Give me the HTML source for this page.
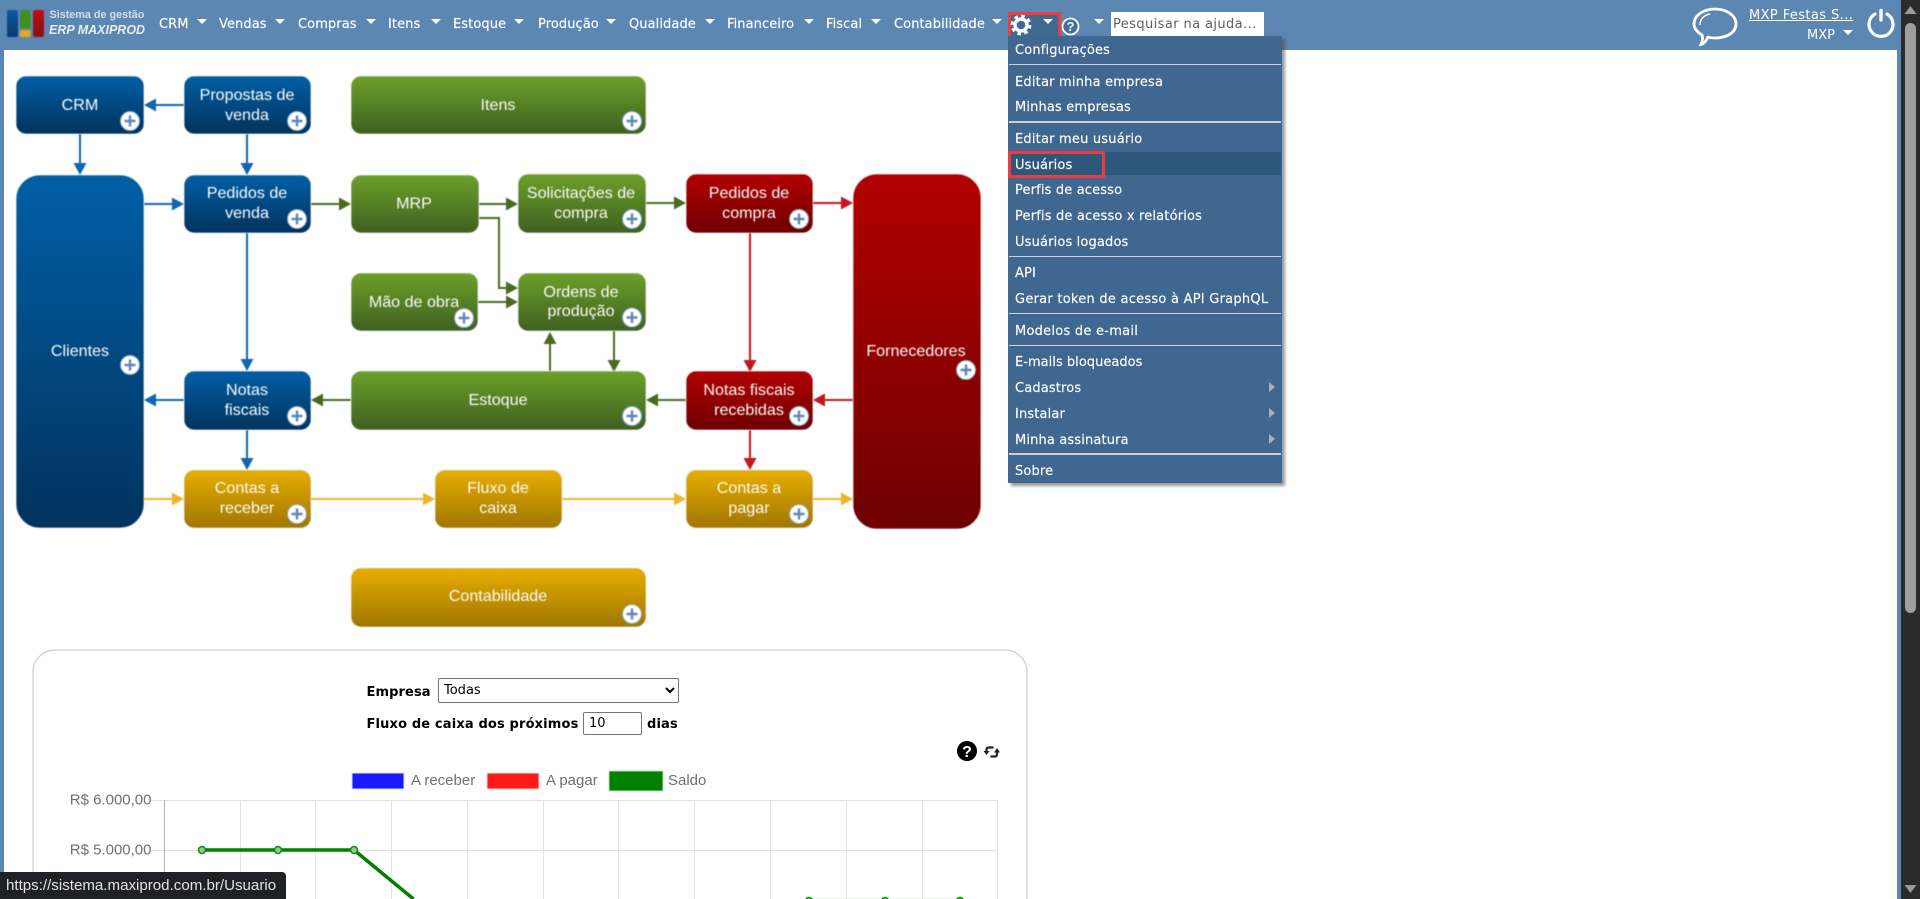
<!DOCTYPE html>
<html lang="pt-BR"><head><meta charset="utf-8"><title>ERP MAXIPROD</title>
<style>
*{box-sizing:border-box}
html,body{margin:0;padding:0;width:1920px;height:899px;overflow:hidden;background:#5c87b3}
body{position:relative;font-family:"DejaVu Sans","Liberation Sans",sans-serif;font-size:13px}
.abs,.nav,.mi,.dv,.ar,.dn{position:absolute}
#main{position:absolute;left:4px;top:50px;width:1893px;height:849px;background:#fff}
.nav{top:17px;color:#fff;font-size:13px;line-height:16px;white-space:nowrap;letter-spacing:.08px;-webkit-text-stroke:.15px #fff}
.dn{width:0;height:0;border-left:5px solid transparent;border-right:5px solid transparent;border-top:5px solid #fff;top:19px;margin-left:.5px}
#menu{position:absolute;left:1008px;top:36px;width:274px;height:447px;background:#3f678f;box-shadow:3px 3px 3px rgba(70,70,70,.55)}
.mi{left:7px;color:#fff;font-size:13px;line-height:18px;white-space:nowrap;letter-spacing:.15px;-webkit-text-stroke:.15px #fff;margin-top:2px}
.dv{left:1px;width:272px;height:1px;background:#c9d2dc}
.dv.t{height:2px}
.ar{left:261px;width:0;height:0;border-top:5.5px solid transparent;border-bottom:5.5px solid transparent;border-left:6px solid #a7b2bf}
.lab{position:absolute;font-weight:bold;color:#000;font-size:13px;line-height:16px;white-space:nowrap}
#st{position:absolute;left:0;top:872px;width:286px;height:27px;background:#202124;border-top-right-radius:4px;color:#e3e3e3;font:15.1px/28px "Liberation Sans",sans-serif;padding-left:6px;white-space:nowrap}
select{position:absolute;left:438px;top:678px;width:241px;height:25px;font:13px "DejaVu Sans",sans-serif;background:#fff;border:1px solid #767676;border-radius:2px;padding-left:1px;color:#000}
input{position:absolute;font-family:"DejaVu Sans",sans-serif;font-size:13px}
</style></head><body>
<div id="main"></div>

<svg class="abs" style="left:0;top:0;filter:blur(.4px)" width="1920" height="899" viewBox="0 0 1920 899" font-family="Liberation Sans, sans-serif">
<defs>
<linearGradient id="b" x1="0" y1="0" x2="0" y2="1"><stop offset="0" stop-color="#015fa6"/><stop offset="1" stop-color="#01335d"/></linearGradient>
<linearGradient id="g" x1="0" y1="0" x2="0" y2="1"><stop offset="0" stop-color="#6ca12a"/><stop offset="1" stop-color="#3f5f20"/></linearGradient>
<linearGradient id="r" x1="0" y1="0" x2="0" y2="1"><stop offset="0" stop-color="#b30000"/><stop offset="1" stop-color="#6e0000"/></linearGradient>
<linearGradient id="y" x1="0" y1="0" x2="0" y2="1"><stop offset="0" stop-color="#e8ae00"/><stop offset="1" stop-color="#a07600"/></linearGradient>
<g id="p"><circle r="9.5" fill="#fff" stroke="#8aa5c6" stroke-width="1"/><path d="M-5.5 0H5.5M0-5.5V5.5" stroke="#5b87b8" stroke-width="2.4"/></g>
</defs>

<!-- connectors -->
<g fill="none" stroke-width="2">
<g stroke="#1166ae">
<path d="M184 105H156M80 134V163M247 134V163M144 204H172M247 233V359M184 400H156M247 430V458"/>
</g>
<g stroke="#4a6a20">
<path d="M311 204H339M479 204H506M479 218H499V288H506M478 302H506M646 203H674M550 372V344M614 331V360M686 400H658M351 400H323"/>
</g>
<g stroke="#c4161e">
<path d="M813 203H841M750 233V360M853 400H825M750 430V458"/>
</g>
<g stroke="#f0b429">
<path d="M144 499H172M311 499H423M562 499H674M813 499H841"/>
</g>
</g>
<g fill="#1166ae"><path d="M144 105L156 98.5V111.5ZM80 175L73.500 163H86.500ZM247 175L240.500 163H253.500ZM184 204L172 197.500V210.500ZM247 371L240.500 359H253.500ZM144 400L156 393.500V406.500ZM247 470L240.500 458H253.500Z"/></g>
<g fill="#4a6a20"><path d="M351 204L339 197.500V210.500ZM518 204L506 197.500V210.500ZM518 288L506 281.500V294.500ZM518 302L506 295.500V308.500ZM686 203L674 196.500V209.500ZM550 332L543.500 344H556.500ZM614 372L607.500 360H620.500ZM646 400L658 393.500V406.500ZM311 400L323 393.500V406.500Z"/></g>
<g fill="#c4161e"><path d="M853 203L841 196.500V209.500ZM750 372L743.500 360H756.500ZM813 400L825 393.500V406.500ZM750 470L743.500 458H756.500Z"/></g>
<g fill="#f0b429"><path d="M184 499L172 492.500V505.500ZM435 499L423 492.500V505.500ZM686 499L674 492.500V505.500ZM853 499L841 492.500V505.500Z"/></g>

<!-- boxes -->
<g stroke="#e6ecf2" stroke-width=".8">
<rect x="16" y="76" width="128" height="58" rx="10" fill="url(#b)"/>
<rect x="184" y="76" width="127" height="58" rx="10" fill="url(#b)"/>
<rect x="351" y="76" width="295" height="58" rx="10" fill="url(#g)"/>
<rect x="16" y="175" width="128" height="353" rx="24" fill="url(#b)"/>
<rect x="184" y="175" width="127" height="58" rx="10" fill="url(#b)"/>
<rect x="351" y="175" width="128" height="58" rx="10" fill="url(#g)"/>
<rect x="518" y="174" width="128" height="59" rx="10" fill="url(#g)"/>
<rect x="686" y="174" width="127" height="59" rx="10" fill="url(#r)"/>
<rect x="853" y="174" width="128" height="355" rx="24" fill="url(#r)"/>
<rect x="351" y="273" width="127" height="58" rx="10" fill="url(#g)"/>
<rect x="518" y="273" width="128" height="58" rx="10" fill="url(#g)"/>
<rect x="184" y="371" width="127" height="59" rx="10" fill="url(#b)"/>
<rect x="351" y="371" width="295" height="59" rx="10" fill="url(#g)"/>
<rect x="686" y="371" width="127" height="59" rx="10" fill="url(#r)"/>
<rect x="184" y="470" width="127" height="58" rx="10" fill="url(#y)"/>
<rect x="435" y="470" width="127" height="58" rx="10" fill="url(#y)"/>
<rect x="686" y="470" width="127" height="58" rx="10" fill="url(#y)"/>
<rect x="351" y="568" width="295" height="59" rx="10" fill="url(#y)"/>
</g>

<g fill="#fbfbfb" font-size="16.1" text-anchor="middle">
<text x="80" y="110">CRM</text>
<text x="247" y="100">Propostas de</text><text x="247" y="120">venda</text>
<text x="498" y="110">Itens</text>
<text x="80" y="356">Clientes</text>
<text x="247" y="198">Pedidos de</text><text x="247" y="218">venda</text>
<text x="414" y="208.500">MRP</text>
<text x="581" y="198">Solicitações de</text><text x="581" y="218">compra</text>
<text x="749" y="198">Pedidos de</text><text x="749" y="218">compra</text>
<text x="916" y="356">Fornecedores</text>
<text x="414" y="307">Mão de obra</text>
<text x="581" y="297">Ordens de</text><text x="581" y="316">produção</text>
<text x="247" y="395">Notas</text><text x="247" y="415">fiscais</text>
<text x="498" y="405">Estoque</text>
<text x="749" y="395">Notas fiscais</text><text x="749" y="415">recebidas</text>
<text x="247" y="493">Contas a</text><text x="247" y="513">receber</text>
<text x="498" y="493">Fluxo de</text><text x="498" y="513">caixa</text>
<text x="749" y="493">Contas a</text><text x="749" y="513">pagar</text>
<text x="498" y="601">Contabilidade</text>
</g>

<use href="#p" x="130" y="121"/><use href="#p" x="297" y="121"/><use href="#p" x="632" y="121"/>
<use href="#p" x="130" y="365"/><use href="#p" x="297" y="219"/><use href="#p" x="632" y="219"/>
<use href="#p" x="799" y="219"/><use href="#p" x="966" y="370"/><use href="#p" x="464" y="318"/>
<use href="#p" x="632" y="317.500"/><use href="#p" x="297" y="416"/><use href="#p" x="632" y="416"/>
<use href="#p" x="799" y="416"/><use href="#p" x="297" y="514"/><use href="#p" x="799" y="514"/>
<use href="#p" x="632" y="614"/>
</svg>

<!-- card + chart -->
<svg class="abs" style="left:0;top:0" width="1920" height="899" viewBox="0 0 1920 899" font-family="Liberation Sans, sans-serif">
<path d="M33 899V672a22 22 0 0 1 22-22H1005a22 22 0 0 1 22 22V899" fill="none" stroke="#cfcfcf" stroke-width="1.200"/>
<g stroke="#e2e2e2" fill="none">
<path d="M151 800.500H997.500M151 850.500H997.500M240.500 800V899M315.500 800V899M391.500 800V899M467.500 800V899M543.500 800V899M618.500 800V899M694.500 800V899M770.500 800V899M846.500 800V899M922.500 800V899M997.500 800V899"/>
</g>
<path d="M164.500 800V899" stroke="#b3b3b3"/>
<rect x="352" y="773" width="52" height="16" fill="#1a1aff" stroke="#dcdcff"/>
<rect x="487" y="773" width="52" height="16" fill="#ff1a1a" stroke="#ffdcdc"/>
<rect x="609" y="771" width="54" height="20" fill="#008000" stroke="#b6dcb6"/>
<g fill="#707070" font-size="15">
<text x="411" y="785">A receber</text><text x="546" y="785">A pagar</text><text x="668" y="785">Saldo</text>
<text x="151.500" y="804.500" text-anchor="end">R$ 6.000,00</text>
<text x="151.500" y="854.500" text-anchor="end">R$ 5.000,00</text>
</g>
<path d="M202 850H354L413.500 899" fill="none" stroke="#008000" stroke-width="3.500"/>
<path d="M809 899.500H960" stroke="#b8dfb8" stroke-width="1.500"/>
<g fill="#8fcb8f" stroke="#118a11" stroke-width="1.500">
<circle cx="202" cy="850" r="3.500"/><circle cx="278" cy="850" r="3.500"/><circle cx="354" cy="850" r="3.500"/>
<circle cx="809" cy="901" r="3.500"/><circle cx="885" cy="901" r="3.500"/><circle cx="960" cy="901" r="3.500"/>
</g>
<circle cx="967" cy="751" r="10" fill="#000"/>
<text x="967" y="757" fill="#fff" font-size="16" font-weight="bold" text-anchor="middle">?</text>
<g fill="none" stroke="#222" stroke-width="2.200">
<path d="M993.500 747.500H988.500a2 2 0 0 0-2 2V752"/><path d="M990.500 756.500H995a2 2 0 0 0 2-2V751"/>
</g>
<path d="M983.500 751H989.500L986.500 755ZM994 752.500H1000L997 748Z" fill="#222"/>
</svg>

<div class="lab" style="left:366.500px;top:685px;letter-spacing:.1px">Empresa</div>
<select><option>Todas</option></select>
<div class="lab" style="left:366.500px;top:717px;letter-spacing:.15px">Fluxo de caixa dos próximos</div>
<input value="10" style="left:583px;top:712px;width:59px;height:23px;border:1px solid #767676;border-radius:2px;padding:0 5px;background:#fff;color:#000">
<div class="lab" style="left:647px;top:717px;letter-spacing:.15px">dias</div>

<!-- header -->
<div class="abs" style="left:0;top:0;width:1901px;height:50px;background:#5c87b3"></div>
<svg class="abs" style="left:7px;top:10px;filter:blur(.4px)" width="38" height="28" viewBox="0 0 38 28">
<defs>
<linearGradient id="lb" x1="0" y1="0" x2="0" y2="1"><stop offset="0" stop-color="#0c5aa6"/><stop offset="1" stop-color="#0b3a6e"/></linearGradient>
<linearGradient id="lr" x1="0" y1="0" x2="0" y2="1"><stop offset="0" stop-color="#c00d12"/><stop offset="1" stop-color="#8a1018"/></linearGradient>
</defs>
<rect x="0" y="0" width="11" height="27" rx="2" fill="url(#lb)"/>
<rect x="13" y="0" width="10.500" height="18.500" rx="2" fill="#3f8f1e"/>
<rect x="13" y="20" width="10.500" height="7" rx="1.500" fill="#e3a91c"/>
<rect x="26" y="0" width="11" height="27" rx="2" fill="url(#lr)"/>
</svg>
<div class="abs" style="left:49.500px;top:9px;color:#d5dee8;font:bold 10.800px/13px 'Liberation Sans',sans-serif;white-space:nowrap">Sistema de gestão</div>
<div class="abs" style="left:49px;top:23px;color:#e6ecf2;font:italic bold 12.500px/15px 'Liberation Sans',sans-serif;white-space:nowrap">ERP MAXIPROD</div>

<span class="nav" style="left:159px">CRM</span><i class="dn" style="left:196px"></i>
<span class="nav" style="left:219px">Vendas</span><i class="dn" style="left:274px"></i>
<span class="nav" style="left:298px">Compras</span><i class="dn" style="left:365px"></i>
<span class="nav" style="left:388px">Itens</span><i class="dn" style="left:430px"></i>
<span class="nav" style="left:453px">Estoque</span><i class="dn" style="left:513px"></i>
<span class="nav" style="left:538px">Produção</span><i class="dn" style="left:605px"></i>
<span class="nav" style="left:629px">Qualidade</span><i class="dn" style="left:704px"></i>
<span class="nav" style="left:727px">Financeiro</span><i class="dn" style="left:803px"></i>
<span class="nav" style="left:826px">Fiscal</span><i class="dn" style="left:870px"></i>
<span class="nav" style="left:894px">Contabilidade</span><i class="dn" style="left:991px"></i>

<div class="abs" style="left:1008px;top:12px;width:53px;height:28px;background:#416a93;border:3px solid #f23b3f"></div>
<svg class="abs" style="left:1009px;top:13px" width="24" height="24" viewBox="0 0 24 24" fill="none" stroke="#fff">
<circle cx="12" cy="12" r="6" stroke-width="3.400"/>
<circle cx="12" cy="12" r="8.800" stroke-width="3.200" stroke-dasharray="3.450 3.460"/>
</svg>
<i class="dn" style="left:1042px;top:19px"></i>
<svg class="abs" style="left:1061px;top:17px" width="19" height="19" viewBox="0 0 19 19">
<circle cx="9.500" cy="9.500" r="8" fill="#44709b" stroke="#fff" stroke-width="1.800"/>
<text x="9.500" y="14" text-anchor="middle" fill="#f0f4f8" font-family="Liberation Sans,sans-serif" font-size="13" font-weight="bold">?</text>
</svg>
<i class="dn" style="left:1093px;top:19px"></i>
<div class="abs" style="left:1111px;top:12px;width:153px;height:24px;background:#fff;color:#5f5f5f;font-size:13px;line-height:26px;padding-left:2px;white-space:nowrap;overflow:hidden;letter-spacing:.4px">Pesquisar na ajuda...</div>

<svg class="abs" style="left:1690px;top:5px" width="52" height="44" viewBox="0 0 52 44" fill="none" stroke="#fff" stroke-width="2.800">
<path d="M25 4C36 4 46 10 46 19C46 28 36 33 25 33C22 33 20 32.700 18 32.200C16 36 14 39 11 39.500C12.500 36.500 13 33 12 30C7 27 4 23.500 4 19C4 10 14 4 25 4Z"/>
<path d="M10 20C10 14 14 10 20 9" stroke-width="1.400"/>
</svg>
<div class="abs" style="left:1749px;top:8px;color:#fff;font-size:13px;line-height:16px;text-decoration:underline;white-space:nowrap;letter-spacing:.4px">MXP Festas S...</div>
<div class="abs" style="left:1807px;top:28px;color:#fff;font-size:13px;line-height:16px">MXP</div>
<i class="dn" style="left:1842px;top:30px"></i>
<svg class="abs" style="left:1866px;top:4px" width="30" height="36" viewBox="0 0 30 36" fill="none" stroke="#fff" stroke-linecap="round">
<path d="M9 10A12 12 0 1 0 21 10" stroke-width="3.200"/>
<path d="M15 6.500V16" stroke-width="3.400"/>
</svg>

<!-- dropdown -->
<div id="menu">
<div class="mi" style="top:4px">Configurações</div>
<div class="dv" style="top:28px"></div>
<div class="mi" style="top:36px;letter-spacing:.2px">Editar minha empresa</div>
<div class="mi" style="top:61px">Minhas empresas</div>
<div class="dv t" style="top:85px"></div>
<div class="mi" style="top:93px;letter-spacing:.2px">Editar meu usuário</div>
<div class="abs" style="left:0;top:116px;width:273px;height:23px;background:#2e577c"></div>
<div class="mi" style="top:119px">Usuários</div>
<div class="mi" style="top:144px">Perfis de acesso</div>
<div class="mi" style="top:170px;letter-spacing:.17px">Perfis de acesso x relatórios</div>
<div class="mi" style="top:196px">Usuários logados</div>
<div class="dv" style="top:220px"></div>
<div class="mi" style="top:227px">API</div>
<div class="mi" style="top:253px;letter-spacing:.25px">Gerar token de acesso à API GraphQL</div>
<div class="dv" style="top:277px"></div>
<div class="mi" style="top:285px;letter-spacing:.25px">Modelos de e-mail</div>
<div class="dv" style="top:309px"></div>
<div class="mi" style="top:316px;letter-spacing:.03px">E-mails bloqueados</div>
<div class="mi" style="top:342px">Cadastros</div><i class="ar" style="top:346px"></i>
<div class="mi" style="top:368px">Instalar</div><i class="ar" style="top:372px"></i>
<div class="mi" style="top:394px">Minha assinatura</div><i class="ar" style="top:398px"></i>
<div class="dv t" style="top:417px"></div>
<div class="mi" style="top:425px">Sobre</div>
</div>
<div class="abs" style="left:1008px;top:151px;width:97px;height:27px;border:3px solid #f23b3f"></div>

<div id="st">https://sistema.maxiprod.com.br/Usuario</div>

<!-- scrollbar -->
<div class="abs" style="left:1901px;top:0;width:19px;height:899px;background:#2b2b2b"></div>
<div class="abs" style="left:1905px;top:23px;width:11px;height:590px;background:#9f9f9f;border-radius:5.500px"></div>
<svg class="abs" style="left:1901px;top:0" width="19" height="899" viewBox="0 0 19 899" fill="#9a9a9a"><path d="M9.500 6L15.500 14H3.500Z"/><path d="M3.500 885H15.500L9.500 893Z"/></svg>
</body></html>
